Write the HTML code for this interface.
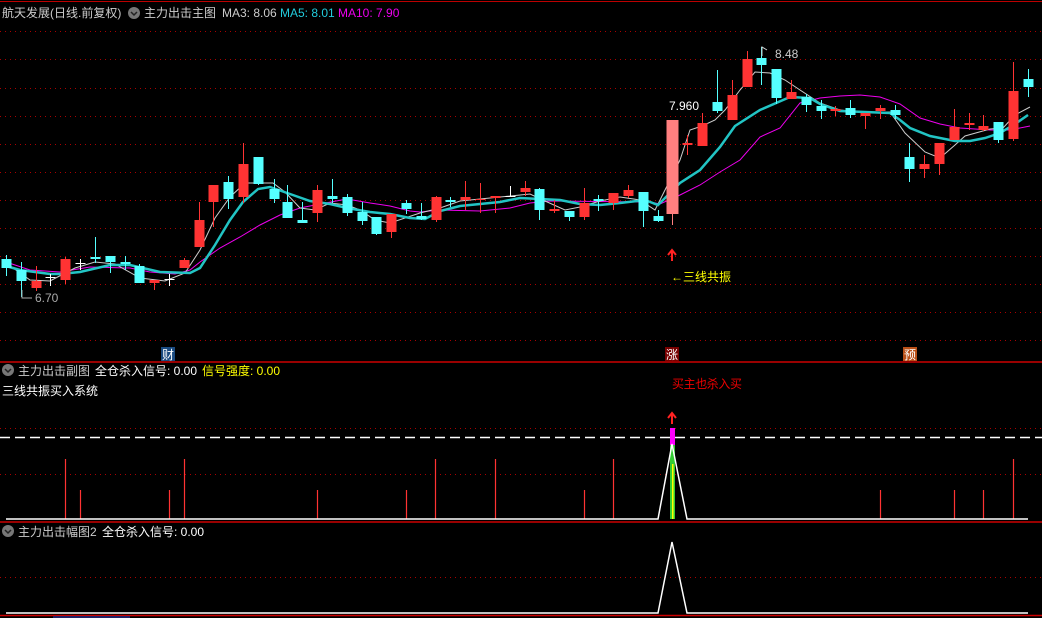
<!DOCTYPE html>
<html><head><meta charset="utf-8"><style>
html,body{margin:0;padding:0;background:#000;width:1042px;height:618px;overflow:hidden}
svg{display:block}
text{font-family:"Liberation Sans","Noto Sans CJK SC",sans-serif;font-size:12px}
</style></head><body>
<svg id="s" width="1042" height="618" viewBox="0 0 1042 618" xmlns="http://www.w3.org/2000/svg">
<rect width="1042" height="618" fill="#000"/>
<line x1="0" y1="1.5" x2="1042" y2="1.5" stroke="#b00" stroke-width="1"/>
<g id="grid" stroke="#a00" stroke-width="1" stroke-dasharray="1 4"></g>
<g id="ma"></g>
<g id="c"></g>
<!-- header -->
<text x="2" y="17" fill="#ccc">航天发展(日线.前复权)</text>
<circle cx="134" cy="13" r="6" fill="#777"/><path d="M131 12l3 3 3-3" stroke="#222" stroke-width="1.5" fill="none"/>
<text x="144" y="17" fill="#ccc">主力出击主图</text>
<text x="222" y="17" fill="#ccc">MA3: 8.06</text>
<text x="280" y="17" fill="#2cd">MA5: 8.01</text>
<text x="338" y="17" fill="#e0e">MA10: 7.90</text>
<!-- annotations -->
<path d="M762 56V47l5 3" stroke="#ccc" fill="none"/><text x="775" y="58" fill="#ccc">8.48</text>
<text x="669" y="110" fill="#fff">7.960</text>
<path d="M22 290v8h10" stroke="#aaa" fill="none"/><text x="35" y="302" fill="#aaa">6.70</text>
<path d="M672 261v-10M668 255l4-5 4 5" stroke="#f22" stroke-width="2" fill="none"/>
<text x="671" y="281" fill="#ff0">←三线共振</text>
<rect x="161" y="347" width="14" height="14" fill="#1a4a80"/><text x="162" y="359" fill="#fff">财</text>
<rect x="665" y="347" width="14" height="14" fill="#700"/><text x="666" y="359" fill="#fff">涨</text>
<rect x="903" y="347" width="14" height="14" fill="#b85018"/><text x="904" y="359" fill="#fff">预</text>
<line x1="0" y1="362" x2="1042" y2="362" stroke="#c00" stroke-width="1.5"/>
<!-- sub pane 1 -->
<circle cx="8" cy="370" r="6" fill="#777"/><path d="M5 369l3 3 3-3" stroke="#222" stroke-width="1.5" fill="none"/>
<text x="18" y="375" fill="#ccc">主力出击副图</text><text x="95" y="375" fill="#fff">全仓杀入信号: 0.00</text><text x="202" y="375" fill="#ff0">信号强度: 0.00</text>
<text x="2" y="395" fill="#fff">三线共振买入系统</text>
<text x="672" y="388" fill="#e00" font-size="9" textLength="70">买主也杀入买</text>
<path d="M672 424v-10M668 418l4-5 4 5" stroke="#f22" stroke-width="2" fill="none"/>
<line x1="0" y1="428.5" x2="1042" y2="428.5" stroke="#a00" stroke-dasharray="1 4"/>
<line x1="0" y1="437.5" x2="1042" y2="437.5" stroke="#fff" stroke-dasharray="10 5" stroke-width="1.5"/>
<line x1="0" y1="474.5" x2="1042" y2="474.5" stroke="#a00" stroke-dasharray="1 4"/>
<g id="v" stroke="#f33" stroke-width="1.2"></g>
<rect x="670" y="445" width="5" height="74" fill="#3c3"/><rect x="672" y="464" width="1.5" height="55" fill="#ff0"/>
<rect x="670" y="428" width="5" height="17" fill="#f0f"/>
<polyline points="6,519 658,519 672,444 687,519 1028,519" stroke="#fff" fill="none" stroke-width="1.5"/>
<line x1="0" y1="522" x2="1042" y2="522" stroke="#c00" stroke-width="1.5"/>
<!-- sub pane 2 -->
<circle cx="8" cy="531" r="6" fill="#777"/><path d="M5 530l3 3 3-3" stroke="#222" stroke-width="1.5" fill="none"/>
<text x="18" y="536" fill="#ccc">主力出击幅图2</text><text x="102" y="536" fill="#fff">全仓杀入信号: 0.00</text>
<line x1="0" y1="577.5" x2="1042" y2="577.5" stroke="#a00" stroke-dasharray="1 4"/>
<polyline points="6,613 658,613 672,542 687,613 1028,613" stroke="#fff" fill="none" stroke-width="1.5"/>
<line x1="0" y1="615.5" x2="1042" y2="615.5" stroke="#c00" stroke-width="1.5"/>
<rect x="53" y="616" width="77" height="2" fill="#226"/>
</svg>
<script>
var NS="http://www.w3.org/2000/svg";
function el(p,t,a){var e=document.createElementNS(NS,t);for(var k in a)e.setAttribute(k,a[k]);document.getElementById(p).appendChild(e);return e;}
[31,59,88,116,144,172,200,228,256,284,312,340].forEach(function(y){el("grid","line",{x1:0,x2:1042,y1:y+.5,y2:y+.5});});
// x, color(c=cyan r=red w=white p=pink), bodyTop, bodyBot, wickTop, wickBot
var C=[[6,'c',259,268,255,276],[21,'c',270,281,262,297],[36,'r',281,288,266,291],[50,'w',277,278,274,286],[65,'r',259,280,257,284],[80,'w',263,264,259,270],[95,'c',257,259,237,263],[110,'c',256,262,256,273],[125,'c',262,264,256,270],[139,'c',266,283,264,283],[154,'r',280,283,280,290],[169,'w',279,280,274,286],[184,'r',260,268,258,268],[199,'r',220,247,202,247],[213,'r',185,202,185,227],[228,'c',182,199,176,209],[243,'r',164,197,143,203],[258,'c',157,184,157,185],[274,'c',189,199,179,203],[287,'c',202,218,185,218],[302,'c',220,223,202,223],[317,'r',190,213,185,222],[332,'c',196,199,179,203],[347,'c',197,213,194,216],[362,'c',212,221,202,225],[376,'c',217,234,217,235],[391,'r',214,232,214,238],[406,'c',203,209,200,214],[421,'c',216,219,203,220],[436,'r',197,220,196,222],[450,'c',200,202,197,207],[465,'r',197,200,181,210],[480,'r',199,200,183,213],[495,'r',196,198,196,213],[510,'w',196,197,186,196],[525,'r',188,192,181,196],[539,'c',189,210,188,220],[554,'r',209,211,200,213],[569,'c',211,217,211,221],[584,'r',203,217,188,220],[598,'c',199,201,195,211],[613,'r',193,203,193,210],[628,'r',190,196,185,198],[643,'c',192,211,192,227],[658,'c',216,221,210,222],[672,'p',120,214,120,225],[687,'r',143,145,135,155],[702,'r',123,146,113,146],[717,'c',102,111,70,113],[732,'r',95,120,80,120],[747,'r',59,87,51,87],[761,'c',58,65,47,85],[776,'c',69,98,69,104],[791,'r',92,99,80,99],[806,'c',97,105,94,112],[821,'c',106,111,100,119],[835,'r',109,111,106,116],[850,'c',108,115,100,118],[865,'r',113,116,113,129],[880,'r',108,111,105,119],[895,'c',110,115,105,119],[909,'c',157,169,143,182],[924,'r',164,169,155,178],[939,'r',143,164,143,175],[954,'r',127,140,109,140],[969,'r',123,125,113,130],[983,'r',126,130,115,131],[998,'c',122,140,122,143],[1013,'r',91,139,62,141],[1028,'c',79,87,69,97]];
var col={c:'#55ffff',r:'#ff3333',w:'#ffffff',p:'#ff8080'};
C.forEach(function(d){var x=d[0],f=col[d[1]],w=d[1]=='p'?12:10;
el("c","line",{x1:x+.5,x2:x+.5,y1:d[4],y2:d[5],stroke:f,"stroke-width":1});
var h=Math.max(d[3]-d[2],1);el("c","rect",{x:x-w/2+.5,y:d[2],width:w,height:h,fill:f});});
function pl(pts,c,w){el("ma","polyline",{points:pts,stroke:c,"stroke-width":w,fill:"none"});}
pl("6,262 30,270 60,272 90,267 130,268 150,272 175,274 190,270 200,262 220,248 240,237 260,225 280,215 300,208 320,204 347,199 370,203 390,206 410,211 420,212 440,210 480,211 490,210 510,208 530,203 550,201 650,202 660,204 680,195 700,185 720,172 740,160 760,137 780,128 800,103 820,98 840,96 860,95 880,97 900,104 920,118 940,124 960,128 990,130 1010,130 1030,126","#e0e",1);
pl("6,263 30,280 50,281 75,268 95,262 115,264 140,278 165,281 185,273 200,250 215,218 230,197 245,183 273,183 285,192 300,208 315,210 330,203 347,205 360,210 375,220 390,223 405,218 420,213 440,208 460,201 480,199 500,197 530,194 545,201 565,210 580,207 600,201 620,197 640,200 655,210 665,190 680,160 690,130 702,126 715,120 725,110 740,90 755,72 770,73 785,80 800,90 820,103 840,110 860,112 890,112 905,133 925,152 940,158 955,145 965,136 990,129 1003,128 1015,115 1030,107","#ccc",1);
pl("6,266 20,270 50,274 60,274 80,272 110,265 130,265 160,272 190,273 200,268 215,245 230,220 243,202 258,189 270,187 290,194 310,201 330,204 347,208 370,212 390,214 410,218 425,219 440,211 460,206 480,204 500,202 520,198 540,199 560,200 580,204 600,205 620,203 645,200 658,205 668,195 680,183 700,170 720,147 735,126 760,110 790,97 810,98 820,104 840,111 890,113 900,120 910,128 930,136 955,141 970,141 985,138 1000,133 1015,124 1028,115","#22c4c4",2.5);
[[65,459],[80,490],[169,490],[184,459],[317,490],[406,490],[435,459],[495,459],[584,490],[613,459],[880,490],[954,490],[983,490],[1013,459]].forEach(function(v){el("v","line",{x1:v[0]+.5,x2:v[0]+.5,y1:v[1],y2:519});});
</script>
</body></html>
